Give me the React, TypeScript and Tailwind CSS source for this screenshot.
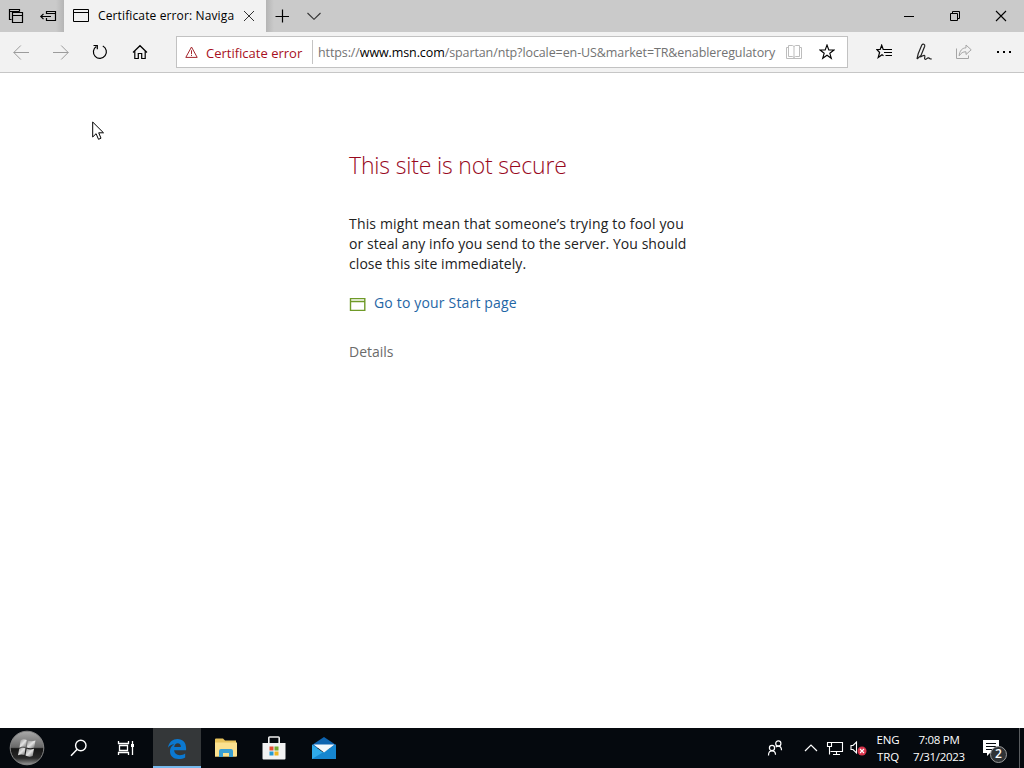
import type { ReactNode } from "react";

type IconProps = {
  w: number;
  h: number;
  className?: string;
  children: ReactNode;
};

function Icon({ w, h, className = "", children }: IconProps) {
  return (
    <svg
      width={w}
      height={h}
      viewBox={`0 0 ${w} ${h}`}
      fill="none"
      stroke="currentColor"
      className={`shrink-0 ${className}`}
      aria-hidden="true"
    >
      {children}
    </svg>
  );
}

export default function App() {
  return (
    <main className="relative flex h-screen w-full flex-col overflow-hidden bg-white font-['Open_Sans','Noto_Sans',sans-serif] text-black">
      <TabBar />
      <Toolbar />
      <ErrorPage />
      <Taskbar />
      <Cursor />
    </main>
  );
}

function TabBar() {
  return (
    <header className="flex h-8 shrink-0 bg-[#cacaca]">
      <button className="flex w-8 items-center justify-center">
        <Icon w={32} h={32}>
          <path d="M11.5 19.5H9.5V9.5H19.5V11.5M9.5 11.5H19.5M12.5 12.5H22.5V22.5H12.5ZM12.5 15.5H22.5" strokeWidth="1.2" />
        </Icon>
      </button>
      <button className="flex w-8 items-center justify-center bg-gradient-to-r from-[#cacaca] from-75% to-[#b5b5b5]">
        <Icon w={32} h={32}>
          <path d="M14.5 14V11.5H23.5V20.5H14.5V18M14.5 13.5H23.5M9 16.5H19M11.5 13.8L8.8 16.5L11.5 19.2" strokeWidth="1.2" />
        </Icon>
      </button>
      <div className="flex w-[202px] items-center bg-[#f2f2f2] pl-[9px]">
        <Icon w={16} h={14}>
          <path d="M.5 .5H15.5V12.5H.5ZM.5 3.5H15.5" />
        </Icon>
        <span className="ml-[9px] w-[137px] overflow-hidden text-[12px] tracking-[0.13px] whitespace-nowrap">
          Certificate error: Naviga
        </span>
        <Icon w={12} h={12} className="ml-2 text-[#333]">
          <path d="M1 1L11 11M11 1L1 11" />
        </Icon>
      </div>
      <button className="flex w-8 items-center justify-center bg-gradient-to-r from-[#b5b5b5] to-[#cacaca] to-25%">
        <Icon w={14} h={14}>
          <path d="M7.5 .5V13.5M.5 7.5H14" strokeWidth="1.2" />
        </Icon>
      </button>
      <button className="flex w-8 items-center justify-center">
        <Icon w={14} h={8} className="text-[#333]">
          <path d="M.5 1L7 7.3L13.5 1" strokeWidth="1.1" />
        </Icon>
      </button>
      <div className="ml-auto flex">
        <button className="flex w-[46px] items-center justify-center">
          <Icon w={10} h={10}>
            <path d="M0 5.5H10" />
          </Icon>
        </button>
        <button className="flex w-[46px] items-center justify-center">
          <Icon w={10} h={10}>
            <path d="M.5 2.5H7.5V9.5H.5ZM2.5 2.5V.5H9.5V7.5H7.5" />
          </Icon>
        </button>
        <button className="flex w-[46px] items-center justify-center">
          <Icon w={12} h={12}>
            <path d="M1 1L11 11M11 1L1 11" strokeWidth="1.1" />
          </Icon>
        </button>
      </div>
    </header>
  );
}

function Toolbar() {
  return (
    <nav className="flex h-[41px] shrink-0 items-center border-b border-[#c6c6c6] bg-[#f2f2f2]">
      <ToolButton>
        <Icon w={16} h={16} className="ml-px text-[#9c9c9c]">
          <path d="M.8 8.5H16M7.8 1.5L.8 8.5L7.8 15.5" />
        </Icon>
      </ToolButton>
      <ToolButton>
        <Icon w={16} h={16} className="ml-px text-[#9c9c9c]">
          <path d="M0 8.5H15.2M8.2 1.5L15.2 8.5L8.2 15.5" />
        </Icon>
      </ToolButton>
      <ToolButton>
        <Icon w={16} h={16}>
          <path d="M10.8 2A6.5 6.5 0 1 1 4.3 2.4M1.5 1.5H5.3V5.3" strokeWidth="1.2" />
        </Icon>
      </ToolButton>
      <ToolButton>
        <Icon w={16} h={16}>
          <path d="M1 8.5L8 1.7L15 8.5M2.8 7V14.5H6.3V9.5H9.7V14.5H13.2V7" strokeWidth="1.2" />
        </Icon>
      </ToolButton>

      <div className="ml-4 flex h-8 w-[672px] items-center border border-[#c2c2c2] bg-white">
        <Icon w={13} h={12} className="ml-2 text-[#a4262c]">
          <path d="M6.5 1L12.2 11.4H.8ZM6.5 4.3V8M6.5 8.8V10" />
        </Icon>
        <span className="ml-2 w-[98px] pt-[3px] text-[13px] whitespace-nowrap text-[#a80f22]">
          Certificate error
        </span>
        <div className="ml-[8px] h-6 w-px bg-[#c4c4c4]" />
        <span className="ml-[5px] w-[459px] overflow-hidden pt-0.5 text-[12.5px] tracking-[-0.1px] whitespace-nowrap text-[#737373]">
          https://<span className="text-black">www.msn.com</span>
          /spartan/ntp?locale=en-US&amp;market=TR&amp;enableregulatory
        </span>
        <Icon w={16} h={16} className="ml-[9px] text-[#bdbdbd]">
          <path d="M2.5 1.5H6.5L8 2.5L9.5 1.5H13.5V12.5H9.5L8 13.5L6.5 12.5H2.5ZM8 2.5V13.5M2.5 3.5H.5V14.5H15.5V3.5H13.5" />
        </Icon>
        <Icon w={16} h={16} className="ml-[17px]">
          <path d="M8 1L9.8 6H15L10.8 9.2L12.3 14.3L8 11.2L3.7 14.3L5.2 9.2L1 6H6.2Z" strokeWidth="1.1" />
        </Icon>
      </div>

      <div className="ml-4 flex">
        <ToolButton>
          <Icon w={16} h={16}>
            <path d="M8.5 5.5H7.2L5.7 1.2L4.2 5.5H.8L3.6 8.5L2.2 13.5L6 10.8L7.5 11.8M8.5 5.5H16M8 8.5H16M9.5 11.5H16" strokeWidth="1.2" />
          </Icon>
        </ToolButton>
        <ToolButton>
          <Icon w={16} h={18} className="text-[#222]">
            <path d="M1 16L2.2 10.8L5.8 2C6.8 .5 9.3 1 8.7 3.2L5 12.5L1 16M4 14C6.2 13.4 7.6 11.7 8.6 12.5C9.8 13.4 7.5 15.2 9 16.2C10.5 16.8 11 14.4 12.5 14.9S14 16.6 15.7 15.8" strokeWidth="1.2" />
          </Icon>
        </ToolButton>
        <ToolButton>
          <Icon w={16} h={16} className="text-[#a5a5a5]">
            <path d="M.5 4.5V14.5H12.5V11.5M10 1L15.2 5.8L10 10.5V7.8C7 7.6 5 9 3.2 11.8C3.5 7 6 4 10 3.8Z" />
          </Icon>
        </ToolButton>
        <ToolButton>
          <Icon w={16} h={4}>
            <path d="M1 2H3M7 2H9M13 2H15" strokeWidth="2" />
          </Icon>
        </ToolButton>
      </div>
    </nav>
  );
}

function ToolButton({ children }: { children: ReactNode }) {
  return <button className="flex h-10 w-10 items-center justify-center">{children}</button>;
}

function ErrorPage() {
  return (
    <section className="min-h-0 flex-1 pt-[76px] pl-[349px]">
      <h1 className="text-[23px] leading-8 font-light tracking-[-0.18px] whitespace-nowrap text-[#98091d]">
        This site is not secure
      </h1>
      <p className="mt-[33px] text-[14px] leading-5 whitespace-nowrap text-[#222]">
        <span className="tracking-[0.17px]">This might mean that someone’s trying to fool you</span>
        <br />
        <span className="tracking-[0.06px]">or steal any info you send to the server. You should</span>
        <br />
        <span className="tracking-[0.07px]">close this site immediately.</span>
      </p>
      <a className="mt-[18px] flex h-5 items-center text-[14px] text-[#1f66a5]">
        <Icon w={17} h={13} className="mt-1 text-[#6f9a28]">
          <path d="M1.5 .5H16M1.5 12.5H16M1.5 0V13M15.8 0V13M1.5 3.5H16" strokeWidth="1.4" />
        </Icon>
        <span className="ml-2 tracking-[0.17px] whitespace-nowrap">Go to your Start page</span>
      </a>
      <p className="mt-[30px] text-[14px] leading-5 text-[#6b6b6b]">Details</p>
    </section>
  );
}

function Taskbar() {
  return (
    <footer className="flex h-10 shrink-0 items-center bg-[#05090e] text-white">
      <button className="flex w-[54px] justify-center">
        <StartOrb />
      </button>
      <TaskButton>
        <Icon w={18} h={18}>
          <circle cx="10.8" cy="6.5" r="5.2" strokeWidth="1.4" />
          <path d="M7.2 10.3L1 16.7" strokeWidth="1.5" />
        </Icon>
      </TaskButton>
      <TaskButton>
        <Icon w={18} h={16} className="-ml-1">
          <path d="M1.5 1V3.5H11.5V1M2.5 5.5V10.5H10.5V5.5ZM1.5 15V12.5H11.5V15M15.5 1V15" strokeWidth="1.3" />
          <path d="M14 4H17V7H14Z" fill="currentColor" stroke="none" />
        </Icon>
      </TaskButton>
      <button className="ml-px flex h-10 w-12 items-center justify-center border-b-2 border-[#76b9ed] bg-[#343739]">
        <svg width="20" height="22" viewBox="0 0 22 24" className="mt-1" aria-hidden="true">
          <path
            d="M1 10.5C2.5 4 6.5 1 11.5 1C17.5 1 21 5 21 11V13.5H7.8C8 17 10.5 18.8 14 18.8C16.5 18.8 18.4 18 20 17V21.3C18 22.5 15.5 23 12.6 23C6.8 23 3.3 19.5 3.3 14.5C3.3 11 5 8.2 8 6.8C5 7 2.8 8.2 1 10.5ZM7.9 9.8H15.3C15.3 7.3 14 5.7 11.8 5.7C9.7 5.7 8.3 7.3 7.9 9.8Z"
            fill="#0b78d0"
          />
        </svg>
      </button>
      <TaskButton>
        <Icon w={22} h={20}>
          <g stroke="none">
            <path d="M0 1.5Q0 .5 1 .5H8L10 2.5H21V18.5H0Z" fill="#e8c35c" />
            <path d="M0 4.5H22V18.5H0Z" fill="#fbe18f" />
            <path d="M4 19V13Q4 11 6 11H16Q18 11 18 13V19H14V15H8V19Z" fill="#399fd3" />
          </g>
        </Icon>
      </TaskButton>
      <TaskButton>
        <Icon w={24} h={24} className="-ml-px">
          <path d="M6.8 8V1.8Q6.8 1 7.6 1H16.4Q17.2 1 17.2 1.8V8" stroke="#eee" strokeWidth="1.6" />
          <g stroke="none">
            <path d="M.5 7H23.5V22.5Q23.5 23.5 22.5 23.5H1.5Q.5 23.5 .5 22.5Z" fill="#f2f2f2" />
            <path d="M7.5 10.5H11.5V14.5H7.5Z" fill="#e34d32" />
            <path d="M12.5 10.5H16.5V14.5H12.5Z" fill="#75a92d" />
            <path d="M7.5 15.5H11.5V19.5H7.5Z" fill="#279bd2" />
            <path d="M12.5 15.5H16.5V19.5H12.5Z" fill="#efb51d" />
          </g>
        </Icon>
      </TaskButton>
      <TaskButton>
        <Icon w={24} h={24}>
          <g stroke="none">
            <path d="M0 9L12 1L24 9V12H0Z" fill="#0e64b0" />
            <path d="M0 8.5L12 17L24 8.5V23H0Z" fill="#2faae9" />
            <path d="M0 23L24 8.5V23Z" fill="#1686d0" />
            <path d="M1.5 8.5H22.5L12 16.5Z" fill="#f3f8fc" />
          </g>
        </Icon>
      </TaskButton>
      <SystemTray />
    </footer>
  );
}

function TaskButton({ children }: { children: ReactNode }) {
  return <button className="flex h-10 w-[49px] items-center justify-center">{children}</button>;
}

function StartOrb() {
  return (
    <Icon w={36} h={36}>
      <defs>
        <linearGradient id="orb" x1="0" y1="0" x2="0" y2="1">
          <stop offset="0" stopColor="#aaa" />
          <stop offset=".48" stopColor="#686868" />
          <stop offset=".52" stopColor="#151515" />
          <stop offset=".8" stopColor="#292929" />
          <stop offset="1" stopColor="#999" />
        </linearGradient>
        <linearGradient id="flag" x1="0" y1="0" x2="1" y2="1">
          <stop offset="0" stopColor="#8b8b8b" />
          <stop offset=".5" stopColor="#e4e4e4" />
          <stop offset="1" stopColor="#666" />
        </linearGradient>
      </defs>
      <circle cx="18" cy="18" r="16.8" fill="url(#orb)" stroke="#858585" />
      <g fill="url(#flag)" stroke="none">
        <path d="M11.5 10.5Q14 8.5 17.8 10L16.8 17Q13.5 16 10.5 17.5Z" />
        <path d="M18.8 10.5Q22 12 26.5 10.5L25.2 17.5Q21 19 17.8 17.3Z" />
        <path d="M10.2 18.7Q13.5 17 16.5 18.3L15.5 25Q12 23.8 9 25.2Z" />
        <path d="M17.6 18.6Q21 20.2 25 18.8L23.7 26Q20 27.5 16.5 25.5Z" />
      </g>
    </Icon>
  );
}

function SystemTray() {
  return (
    <div className="ml-auto flex h-10 items-center">
      <Icon w={16} h={16}>
        <circle cx="5" cy="8" r="2.6" strokeWidth="1.2" />
        <circle cx="11.3" cy="3.5" r="2.6" strokeWidth="1.2" />
        <path d="M1.5 15.5C1.5 12.3 2.8 10.8 5 10.8S8.5 12.5 8.5 14.8M8.7 7.2C9.5 6.4 10.3 6.2 11.3 6.2C13.7 6.2 14.5 8 14.5 10.3" strokeWidth="1.2" />
      </Icon>
      <Icon w={14} h={8} className="ml-[21px]">
        <path d="M1 7L7 1L13 7" strokeWidth="1.2" />
      </Icon>
      <Icon w={18} h={16} className="ml-[8px]">
        <path d="M5 2.5H16.5V11.5H4.5M10.5 11.5V14.5M7 14.5H14M1.5 2.5H5.5V6.5H1.5ZM3.5 6.5V14.5" strokeWidth="1.1" />
      </Icon>
      <Icon w={18} h={16} className="ml-1.5">
        <path d="M1 5.5H3L6.5 2V13L3 9.5H1Z" strokeWidth="1.1" />
        <circle cx="12" cy="11" r="4.5" fill="#d9344c" stroke="none" />
        <path d="M10 9L14 13M14 9L10 13" strokeWidth="1.1" />
      </Icon>
      <div className="ml-[7px] w-[26px] text-center text-[11.5px] leading-[17px] tracking-[-0.1px]">
        <div>ENG</div>
        <div>TRQ</div>
      </div>
      <div className="ml-[8px] w-[60px] text-center text-[11.5px] leading-[17px] tracking-[-0.3px] whitespace-nowrap">
        <div>7:08 PM</div>
        <div>7/31/2023</div>
      </div>
      <div className="relative ml-[14px]">
        <Icon w={17} h={17}>
          <path d="M0 0H16V13H7L4 16V13H0Z" fill="white" stroke="none" />
          <path d="M3 3.5H13M3 6.5H13M3 9.5H9" stroke="#05090e" />
        </Icon>
        <span className="absolute top-[6px] left-[7px] flex h-[17px] w-[17px] items-center justify-center rounded-full border border-[#9b9b9b] bg-[#303336] text-[12px] font-semibold">
          2
        </span>
      </div>
      <div className="mr-1 ml-[19px] h-10 w-px bg-[#5a5d60]" />
    </div>
  );
}

function Cursor() {
  return (
    <Icon w={13} h={20} className="absolute top-[121px] left-[92px]">
      <path d="M.7 1V16L4.1 12.7L6.5 18.3L9 17.2L6.7 11.8H11.5Z" fill="white" />
    </Icon>
  );
}
